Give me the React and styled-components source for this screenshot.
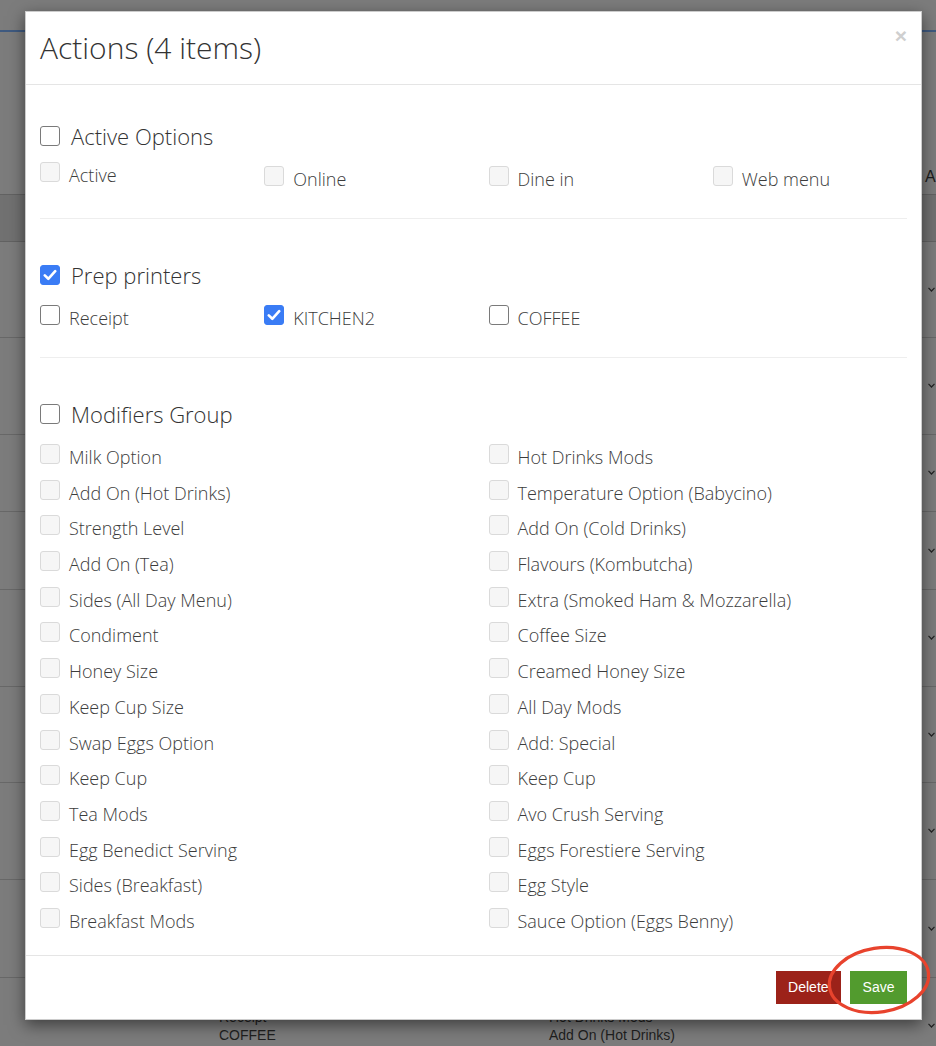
import React from "react";
import styled, { createGlobalStyle } from "styled-components";

const GlobalStyle = createGlobalStyle`
  html, body { margin: 0; padding: 0; }
  body {
    background: #7c7c7c;
    font-family: "Open Sans", "Noto Sans", sans-serif;
  }
  * { box-sizing: border-box; }
`;

/* ---------- background page (dimmed by the modal overlay) ---------- */
const Page = styled.div`
  position: relative;
  width: 936px;
  height: 1046px;
  overflow: hidden;
  background: #7c7c7c;
  font-family: "Liberation Sans", Arial, sans-serif;
  color: #1f1f1f;
`;

const TopBar = styled.div`
  height: 32px;
  border-bottom: 2px solid #3f5a80;
`;

const HeadRow = styled.div`
  height: 162px;
  display: flex;
  align-items: flex-end;
  padding: 0 0 8px 925px;
  font-size: 16px;
  color: #1c1c1c;
`;

const TableHead = styled.div`
  height: 48px;
  background: #717171;
  border-top: 1px solid #626262;
  border-bottom: 1px solid #626262;
`;

const BgRow = styled.div`
  height: ${(p) => p.$h}px;
  border-bottom: 1px solid #686868;
  position: relative;
`;

const Chevron = styled.svg`
  position: absolute;
  right: 1px;
  top: ${(p) => (p.$top ? `${p.$top}px` : "50%")};
  margin-top: -3px;
  width: 7px;
  height: 5px;
`;

const BgCell = styled.div`
  position: absolute;
  left: ${(p) => p.$x}px;
  top: 12px;
  font-size: 14px;
  line-height: 18px;
  color: #1f1f1f;
`;

/* ---------- modal ---------- */
const Modal = styled.div`
  position: absolute;
  left: 25px;
  top: 11px;
  width: 897px;
  background: #fff;
  border: 1px solid rgba(0, 0, 0, 0.2);
  box-shadow: 0 5px 15px rgba(0, 0, 0, 0.5);
  font-family: "Open Sans", "Noto Sans", sans-serif;
`;

const Header = styled.div`
  position: relative;
  padding: 15px 14px;
  border-bottom: 1px solid #e5e5e5;
`;

const Title = styled.h4`
  margin: 0;
  font-size: 30px;
  line-height: 42px;
  font-weight: 300;
  color: #333;
`;

const Close = styled.span`
  position: absolute;
  right: 14px;
  top: 12px;
  font-family: "Liberation Sans", Arial, sans-serif;
  font-size: 21px;
  font-weight: 700;
  color: #cfcfcf;
  line-height: 24px;
`;

const Body = styled.div`
  display: flex;
  flex-direction: column;
  padding: 15px 14px 22px;
`;

const SectionHead = styled.div`
  margin-top: 20px;
  display: flex;
  align-items: center;
  height: 32px;
  gap: 11px;
  font-size: 22px;
  font-weight: 300;
  color: #333;
`;

const Grid = styled.div`
  margin: 0 -15px;
  display: grid;
  grid-template-columns: repeat(${(p) => p.$cols}, 1fr);
  row-gap: ${(p) => p.$gap || 0}px;
  padding-top: ${(p) => p.$top}px;
  padding-bottom: ${(p) => p.$bottom || 0}px;
`;

const Item = styled.label`
  display: flex;
  align-items: flex-start;
  gap: 9px;
  padding: 0 15px;
  margin-top: ${(p) => (p.$raised ? -4 : 0)}px;
  font-size: 18px;
  font-weight: 300;
  line-height: 24px;
  color: #3c3c3c;
  white-space: nowrap;
`;

const Box = styled.span`
  flex: none;
  width: 20px;
  height: 20px;
  margin-top: ${(p) => (p.$inline ? 0 : -1)}px;
  border-radius: 3px;
  display: flex;
  align-items: center;
  justify-content: center;
  background: ${(p) =>
    p.$state === "checked" ? "#3a7cf5" : p.$state === "disabled" ? "#f6f6f6" : "#fff"};
  border: 1px solid
    ${(p) =>
      p.$state === "checked" ? "#3a7cf5" : p.$state === "disabled" ? "#dadada" : "#7a7a7a"};
`;

const Rule = styled.hr`
  width: 100%;
  margin: 20px 0;
  border: 0;
  border-top: 1px solid #eeeeee;
`;

const Footer = styled.div`
  padding: 15px 14px;
  border-top: 1px solid #e5e5e5;
  display: flex;
  justify-content: flex-end;
  gap: 9px;
`;

const Button = styled.button`
  height: 33px;
  padding: 0 12.5px;
  border: 0;
  border-radius: 0;
  font-family: "Liberation Sans", Arial, sans-serif;
  font-size: 14px;
  color: #fff;
  background: ${(p) => p.$bg};
`;

const Annotation = styled.svg`
  position: absolute;
  left: 824px;
  top: 943px;
  width: 110px;
  height: 76px;
  overflow: visible;
`;

const Check = () => (
  <svg width="14" height="12" viewBox="0 0 14 12">
    <path d="M1.8 6.4 L5.3 9.8 L12.2 2.2" fill="none" stroke="#fff" strokeWidth="2.6" strokeLinecap="round" strokeLinejoin="round" />
  </svg>
);

const CheckBox = ({ state, inline }) => (
  <Box $state={state} $inline={inline}>{state === "checked" && <Check />}</Box>
);

const Option = ({ label, state = "disabled", raised }) => (
  <Item $raised={raised}>
    <CheckBox state={state} />
    <span>{label}</span>
  </Item>
);

const leftMods = [
  "Milk Option",
  "Add On (Hot Drinks)",
  "Strength Level",
  "Add On (Tea)",
  "Sides (All Day Menu)",
  "Condiment",
  "Honey Size",
  "Keep Cup Size",
  "Swap Eggs Option",
  "Keep Cup",
  "Tea Mods",
  "Egg Benedict Serving",
  "Sides (Breakfast)",
  "Breakfast Mods",
];
const rightMods = [
  "Hot Drinks Mods",
  "Temperature Option (Babycino)",
  "Add On (Cold Drinks)",
  "Flavours (Kombutcha)",
  "Extra (Smoked Ham & Mozzarella)",
  "Coffee Size",
  "Creamed Honey Size",
  "All Day Mods",
  "Add: Special",
  "Keep Cup",
  "Avo Crush Serving",
  "Eggs Forestiere Serving",
  "Egg Style",
  "Sauce Option (Eggs Benny)",
];

const rowHeights = [96, 97, 77, 78, 97, 96, 97, 98];

const ChevronIcon = ({ top }) => (
  <Chevron viewBox="0 0 7 5" $top={top}>
    <path d="M0.5 0.8 L3.5 4 L6.5 0.8" fill="none" stroke="#222" strokeWidth="1.2" />
  </Chevron>
);

export default function App() {
  const mods = [];
  leftMods.forEach((l, i) => {
    mods.push(l, rightMods[i]);
  });
  return (
    <>
      <GlobalStyle />
      <Page>
        <TopBar />
        <HeadRow>A</HeadRow>
        <TableHead />
        {rowHeights.map((h, i) => (
          <BgRow key={i} $h={h}>
            <ChevronIcon />
          </BgRow>
        ))}
        <BgRow $h={80}>
          <BgCell $x={219}>
            KITCHEN2
            <br />
            Receipt
            <br />
            COFFEE
          </BgCell>
          <BgCell $x={549}>
            Milk Option
            <br />
            Hot Drinks Mods
            <br />
            Add On (Hot Drinks)
          </BgCell>
          <ChevronIcon top={48} />
        </BgRow>

        <Modal>
          <Header>
            <Title>Actions (4 items)</Title>
            <Close>×</Close>
          </Header>
          <Body>
            <SectionHead>
              <CheckBox state="plain" inline />
              Active Options
            </SectionHead>
            <Grid $cols={4} $top={15} $bottom={7}>
              <Option label="Active" raised />
              <Option label="Online" />
              <Option label="Dine in" />
              <Option label="Web menu" />
            </Grid>
            <Rule />

            <SectionHead>
              <CheckBox state="checked" inline />
              Prep printers
            </SectionHead>
            <Grid $cols={4} $top={15} $bottom={7}>
              <Option label="Receipt" state="plain" />
              <Option label="KITCHEN2" state="checked" />
              <Option label="COFFEE" state="plain" />
            </Grid>
            <Rule />

            <SectionHead>
              <CheckBox state="plain" inline />
              Modifiers Group
            </SectionHead>
            <Grid $cols={2} $top={15} $gap={11.7}>
              {mods.map((m, i) => (
                <Option key={i} label={m} />
              ))}
            </Grid>
          </Body>
          <Footer>
            <Button $bg="#9c2219">Delete</Button>
            <Button $bg="#529b2e">Save</Button>
          </Footer>
        </Modal>

        <Annotation viewBox="0 0 110 76">
          <ellipse cx="55" cy="37" rx="50" ry="32" fill="none" stroke="#e8432d" strokeWidth="3.2" transform="rotate(-9 55 37)" />
        </Annotation>
      </Page>
    </>
  );
}
